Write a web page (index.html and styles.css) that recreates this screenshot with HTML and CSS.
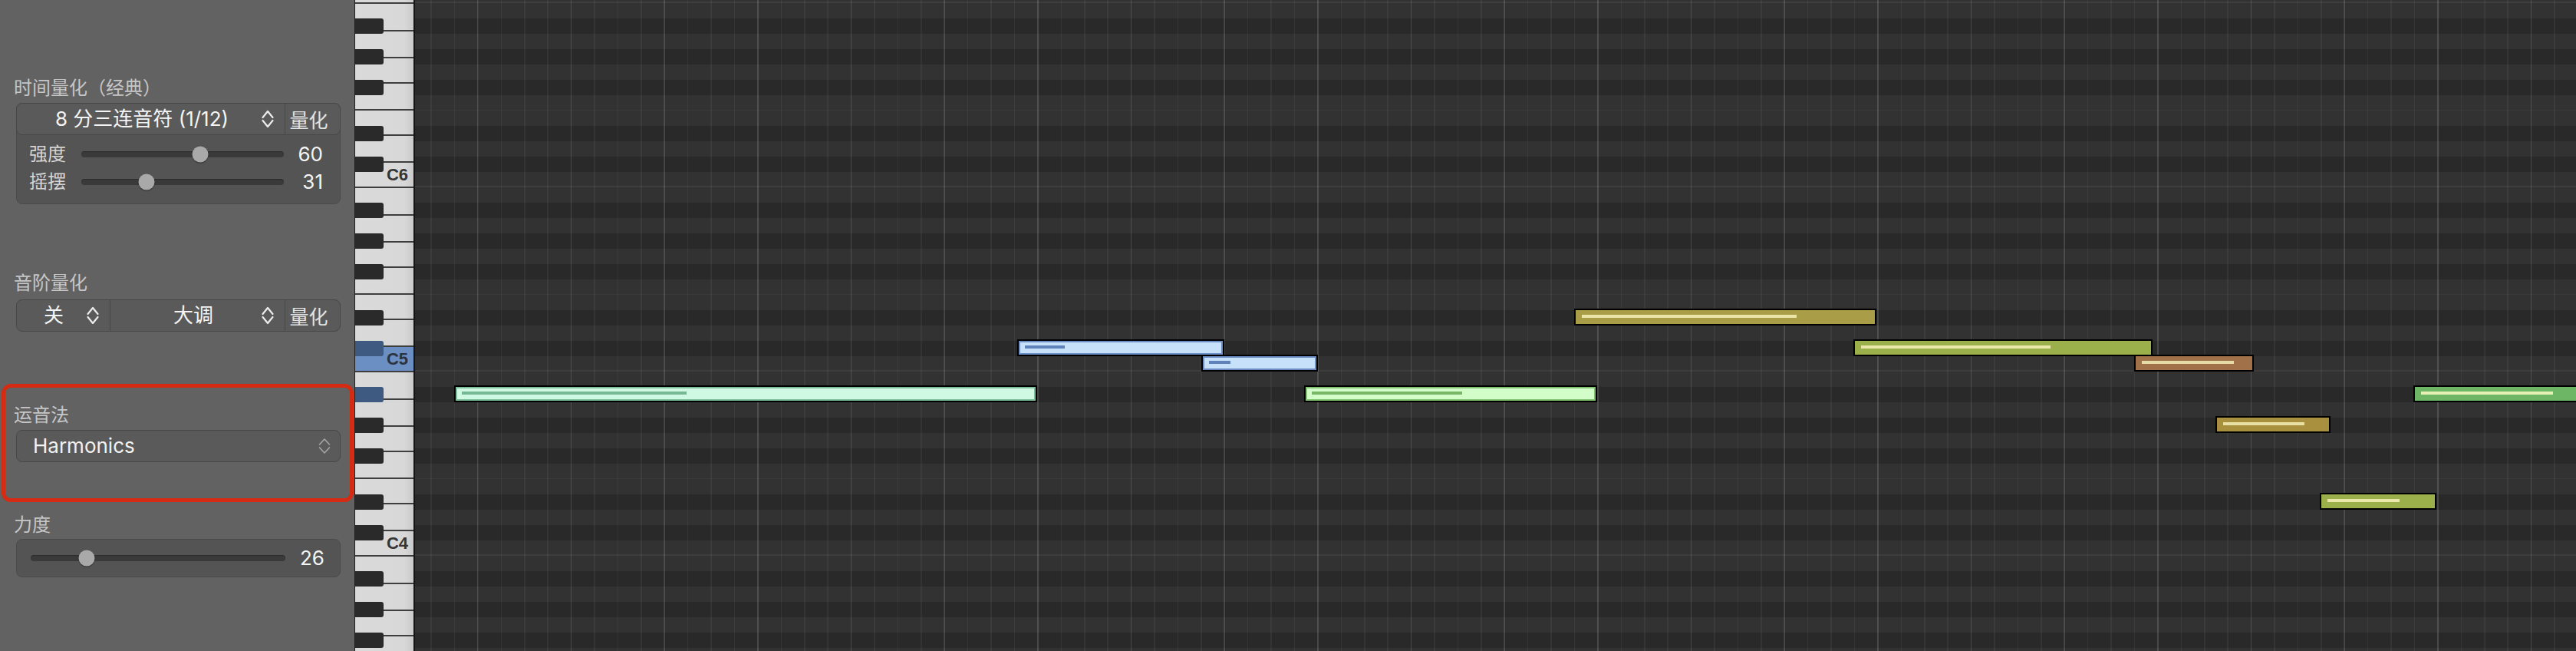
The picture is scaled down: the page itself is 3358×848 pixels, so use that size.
FILE: index.html
```html
<!DOCTYPE html>
<html lang="zh-CN">
<head>
<meta charset="utf-8">
<title>钢琴卷帘</title>
<link rel="stylesheet" href="styles.css">
</head>
<body>
<div class="app">
  <aside class="inspector">
    <section class="group group-time">
      <div class="group-label">时间量化（经典）</div>
      <div class="box">
        <div class="segmented segmented-head">
          <div class="seg seg-select seg-wide">
            <span class="seg-text">8 分三连音符 (1/12)</span>
            <svg class="updown" viewBox="0 0 16 24" width="16" height="24"><path d="M1.5 10 8 2l6.5 8M1.5 14 8 22l6.5-8"/></svg>
          </div>
          <div class="seg seg-btn">量化</div>
        </div>
        <div class="sliders">
          <div class="slider-row">
            <span class="slider-label">强度</span>
            <div class="track"><span class="knob" style="left:58.6%"></span></div>
            <span class="slider-value">60</span>
          </div>
          <div class="slider-row">
            <span class="slider-label">摇摆</span>
            <div class="track"><span class="knob" style="left:32.2%"></span></div>
            <span class="slider-value">31</span>
          </div>
        </div>
      </div>
    </section>

    <section class="group group-scale">
      <div class="group-label">音阶量化</div>
      <div class="segmented segmented-box">
        <div class="seg seg-select seg-off">
          <span class="seg-text">关</span>
          <svg class="updown" viewBox="0 0 16 24" width="16" height="24"><path d="M1.5 10 8 2l6.5 8M1.5 14 8 22l6.5-8"/></svg>
        </div>
        <div class="seg seg-select seg-key">
          <span class="seg-text">大调</span>
          <svg class="updown" viewBox="0 0 16 24" width="16" height="24"><path d="M1.5 10 8 2l6.5 8M1.5 14 8 22l6.5-8"/></svg>
        </div>
        <div class="seg seg-btn">量化</div>
      </div>
    </section>

    <section class="group group-articulation">
      <div class="group-label">运音法</div>
      <div class="segmented segmented-box popup">
        <div class="seg seg-popup">
          <span class="popup-text">Harmonics</span>
          <svg class="updown updown-thin" viewBox="0 0 16 24" width="16" height="24"><path d="M1.5 10 8 3l6.5 7M1.5 14 8 21l6.5-7"/></svg>
        </div>
      </div>
    </section>

    <section class="group group-velocity">
      <div class="group-label">力度</div>
      <div class="box slider-box">
        <div class="track"><span class="knob" style="left:22%"></span></div>
        <span class="slider-value">26</span>
      </div>
    </section>
  </aside>

  <div class="keyboard">
    <div class="wk wk-cap"></div>
    <div class="octave">
      <div class="wk wk-b"></div><div class="wk wk-a"></div><div class="wk wk-g"></div><div class="wk wk-f"></div><div class="wk wk-e"></div><div class="wk wk-d"></div>
      <div class="wk wk-c"><span class="key-label">C6</span></div>
      <div class="bk bk-as"></div><div class="bk bk-gs"></div><div class="bk bk-fs"></div><div class="bk bk-ds"></div><div class="bk bk-cs"></div>
    </div>
    <div class="octave">
      <div class="wk wk-b"></div><div class="wk wk-a"></div><div class="wk wk-g"></div><div class="wk wk-f"></div><div class="wk wk-e"></div><div class="wk wk-d"></div>
      <div class="wk wk-c is-active"><span class="key-label">C5</span></div>
      <div class="bk bk-as"></div><div class="bk bk-gs"></div><div class="bk bk-fs"></div><div class="bk bk-ds"></div><div class="bk bk-cs is-active"></div>
    </div>
    <div class="octave">
      <div class="wk wk-b"></div><div class="wk wk-a"></div><div class="wk wk-g"></div><div class="wk wk-f"></div><div class="wk wk-e"></div><div class="wk wk-d"></div>
      <div class="wk wk-c"><span class="key-label">C4</span></div>
      <div class="bk bk-as is-active"></div><div class="bk bk-gs"></div><div class="bk bk-fs"></div><div class="bk bk-ds"></div><div class="bk bk-cs"></div>
    </div>
    <div class="octave">
      <div class="wk wk-b"></div><div class="wk wk-a"></div><div class="wk wk-g"></div><div class="wk wk-f"></div><div class="wk wk-e"></div><div class="wk wk-d"></div>
      <div class="wk wk-c"></div>
      <div class="bk bk-as"></div><div class="bk bk-gs"></div><div class="bk bk-fs"></div><div class="bk bk-ds"></div><div class="bk bk-cs"></div>
    </div>
  </div>

  <main class="roll">
    <div class="note note-mint" style="left:51px;top:502px;width:760px"><span class="vel" style="width:293px"></span></div>
    <div class="note note-blue" style="left:785px;top:442px;width:270px"><span class="vel" style="width:52px"></span></div>
    <div class="note note-blue" style="left:1025px;top:462px;width:152px"><span class="vel" style="width:28px"></span></div>
    <div class="note note-lime" style="left:1159px;top:502px;width:382px"><span class="vel" style="width:196px"></span></div>
    <div class="note note-olive" style="left:1511px;top:402px;width:394px"><span class="vel" style="width:280px"></span></div>
    <div class="note note-moss" style="left:1875px;top:442px;width:390px"><span class="vel" style="width:247px"></span></div>
    <div class="note note-brown" style="left:2241px;top:462px;width:156px"><span class="vel" style="width:120px"></span></div>
    <div class="note note-gold" style="left:2347px;top:542px;width:150px"><span class="vel" style="width:106px"></span></div>
    <div class="note note-moss" style="left:2483px;top:642px;width:152px"><span class="vel" style="width:94px"></span></div>
    <div class="note note-green" style="left:2605px;top:502px;width:260px"><span class="vel" style="width:172px"></span></div>
  </main>
</div>
</body>
</html>
```

FILE: styles.css
```css
html, body {
  margin: 0;
  padding: 0;
}

body {
  width: 3358px;
  height: 848px;
  overflow: hidden;
  background: #2e2e2e;
  font-family: Inter, "Noto Sans CJK SC", sans-serif;
}

.app {
  display: flex;
  height: 848px;
}

/* ---------- inspector ---------- */

.inspector {
  width: 462px;
  flex: none;
  box-sizing: border-box;
  padding-top: 99px;
  background: #626262;
}

.group-label {
  font-size: 24px;
  line-height: 32px;
  color: #c6c6c6;
  padding-left: 18px;
  margin-bottom: 3px;
  white-space: nowrap;
}

.box {
  margin-left: 21px;
  width: 423px;
  box-sizing: border-box;
  border: 1px solid #4a4a4a;
  border-radius: 8px;
  background: #545454;
}

.segmented {
  display: flex;
  height: 42px;
  box-sizing: border-box;
  border: 1px solid #474747;
  border-radius: 8px;
  background: #5a5a5a;
}

.segmented-head {
  margin: -1px -1px 0;
}

.segmented-box {
  margin-left: 21px;
  width: 423px;
}

.seg {
  display: flex;
  align-items: center;
  height: 100%;
  box-sizing: border-box;
}

.seg + .seg {
  border-left: 1px solid #474747;
}

.seg-select {
  padding-right: 14px;
  color: #ececec;
}

.seg-wide {
  flex: 1;
  padding-left: 7px;
}

.seg-off {
  width: 121px;
  flex: none;
  padding-left: 5px;
}

.seg-key {
  flex: 1;
  padding-left: 19px;
}

.seg-text {
  flex: 1;
  text-align: center;
  font-size: 26px;
  line-height: 1;
  color: #f4f4f4;
  white-space: nowrap;
}

.seg-btn {
  width: 72px;
  flex: none;
  justify-content: center;
  padding-right: 10px;
  font-size: 25px;
  color: #e2e2e2;
}

.updown {
  flex: none;
  fill: none;
  stroke: currentColor;
  stroke-width: 2.2;
  stroke-linecap: round;
  stroke-linejoin: round;
}

.updown-thin {
  stroke-width: 1.6;
  color: #a6a6a6;
}

.seg-popup {
  flex: 1;
  padding-left: 21px;
  padding-right: 12px;
}

.popup-text {
  flex: 1;
  font-size: 26px;
  line-height: 1;
  color: #f2f2f2;
}

.sliders {
  padding: 7px 0 10px;
}

.slider-row {
  display: flex;
  align-items: center;
  height: 36px;
  padding: 0 22px 0 16px;
}

.slider-label {
  width: 68px;
  flex: none;
  font-size: 24px;
  line-height: 1;
  color: #d4d4d4;
}

.track {
  flex: 1;
  position: relative;
  height: 8px;
  border-radius: 4px;
  background: #3a3a3a;
  box-shadow: inset 0 1px 1px rgba(0, 0, 0, 0.25);
}

.knob {
  position: absolute;
  top: 50%;
  width: 21px;
  height: 21px;
  border-radius: 50%;
  background: #a9a9a9;
  transform: translate(-50%, -50%);
  box-shadow: 0 1px 1.5px rgba(0, 0, 0, 0.45);
}

.slider-value {
  width: 51px;
  flex: none;
  text-align: right;
  font-size: 26px;
  line-height: 1;
  color: #f4f4f4;
}

.group-scale {
  margin-top: 87px;
}

.group-scale .group-label {
  margin-bottom: 5px;
}

.group-articulation {
  margin-top: 68px;
  margin-left: 2px;
  width: 459px;
  box-sizing: border-box;
  border: 5px solid #d52b12;
  border-radius: 12px;
  padding: 20px 0 47px;
}

.group-articulation .group-label {
  padding-left: 11px;
}

.group-articulation .segmented-box {
  margin-left: 14px;
}

.group-velocity {
  margin-top: 14px;
}

.group-velocity .group-label {
  margin-bottom: 2px;
}

.slider-box {
  display: flex;
  align-items: center;
  height: 50px;
  padding: 0 20px 0 18px;
}

/* ---------- keyboard ---------- */

.keyboard {
  width: 79px;
  flex: none;
  box-sizing: border-box;
  border-left: 1px solid #1e1e1e;
  border-right: 2px solid #141414;
  overflow: hidden;
  background: #d8d8d8;
}

.octave {
  position: relative;
}

.wk {
  box-sizing: border-box;
  border-bottom: 2px solid #3e3e3e;
  background: linear-gradient(to right, #dadada 0, #d8d8d8 84%, #cacaca 100%);
  display: flex;
  align-items: center;
  justify-content: flex-end;
  padding-right: 7px;
}

.wk-cap { height: 5px; }
.wk-b { height: 36px; }
.wk-a { height: 35px; }
.wk-g { height: 33px; }
.wk-f { height: 35px; }
.wk-e { height: 33px; }
.wk-d { height: 35px; }
.wk-c { height: 33px; }

.wk.is-active {
  background: #6b8fc3;
}

.key-label {
  font-family: "Liberation Sans", Arial, sans-serif;
  font-weight: bold;
  font-size: 22px;
  line-height: 22px;
  color: #353535;
}

.wk.is-active .key-label {
  color: #2c333d;
}

.bk {
  position: absolute;
  left: 0;
  width: 37px;
  height: 20px;
  background: #2a2a2a;
  border-radius: 0 3px 3px 0;
}

.bk.is-active {
  background: #3e5a80;
}

.bk-as { top: 19px; }
.bk-gs { top: 59px; }
.bk-fs { top: 99px; }
.bk-ds { top: 159px; }
.bk-cs { top: 199px; }

/* ---------- piano roll grid ---------- */

.roll {
  flex: 1;
  position: relative;
  overflow: hidden;
  background-color: #323232;
  background-image:
    repeating-linear-gradient(to right,
      transparent 0 80.9px,
      rgba(255, 255, 255, 0.1) 80.9px 82.5px,
      transparent 82.5px 121.667px),
    repeating-linear-gradient(to right,
      transparent 0 20.4px,
      rgba(255, 255, 255, 0.05) 20.4px 21.9px,
      transparent 21.9px 30.4167px),
    linear-gradient(to bottom,
      #323232 0 20px,
      #292929 20px 40px,
      #323232 40px 60px,
      #292929 60px 80px,
      #323232 80px 100px,
      #292929 100px 120px,
      #323232 120px 139px,
      #393939 139px 140px,
      #323232 140px 160px,
      #292929 160px 180px,
      #323232 180px 200px,
      #292929 200px 220px,
      #323232 220px 238px,
      #3d3d3d 238px 240px);
  background-size: auto, auto, 100% 240px;
  background-position: 0 0, 0 0, 0 4px;
  background-repeat: no-repeat, no-repeat, repeat-y;
}

.note {
  position: absolute;
  height: 22px;
  box-sizing: border-box;
  border: 2px solid #000;
}

.vel {
  position: absolute;
  left: 8px;
  top: 6px;
  height: 4px;
}

.note-mint {
  background: #d0f9e4;
  box-shadow: inset 0 0 0 2px #7cbd9a;
}
.note-mint .vel { background: #78b794; }

.note-blue {
  background: #c8e1fa;
  box-shadow: inset 0 0 0 2px #6c8ec4;
}
.note-blue .vel { background: #5f82ba; }

.note-lime {
  background: #d2fcc8;
  box-shadow: inset 0 0 0 2px #80c170;
}
.note-lime .vel { background: #77b667; }

.note-olive { background: #a99d48; }
.note-olive .vel { background: #ebe5a8; }

.note-moss { background: #9bb04b; }
.note-moss .vel { background: #ebe7ab; }

.note-brown { background: #a1724a; }
.note-brown .vel { background: #e4dba8; }

.note-gold { background: #a8903f; }
.note-gold .vel { background: #e9e1a3; }

.note-green { background: #6db665; }
.note-green .vel { background: #e5f1b6; }
```
